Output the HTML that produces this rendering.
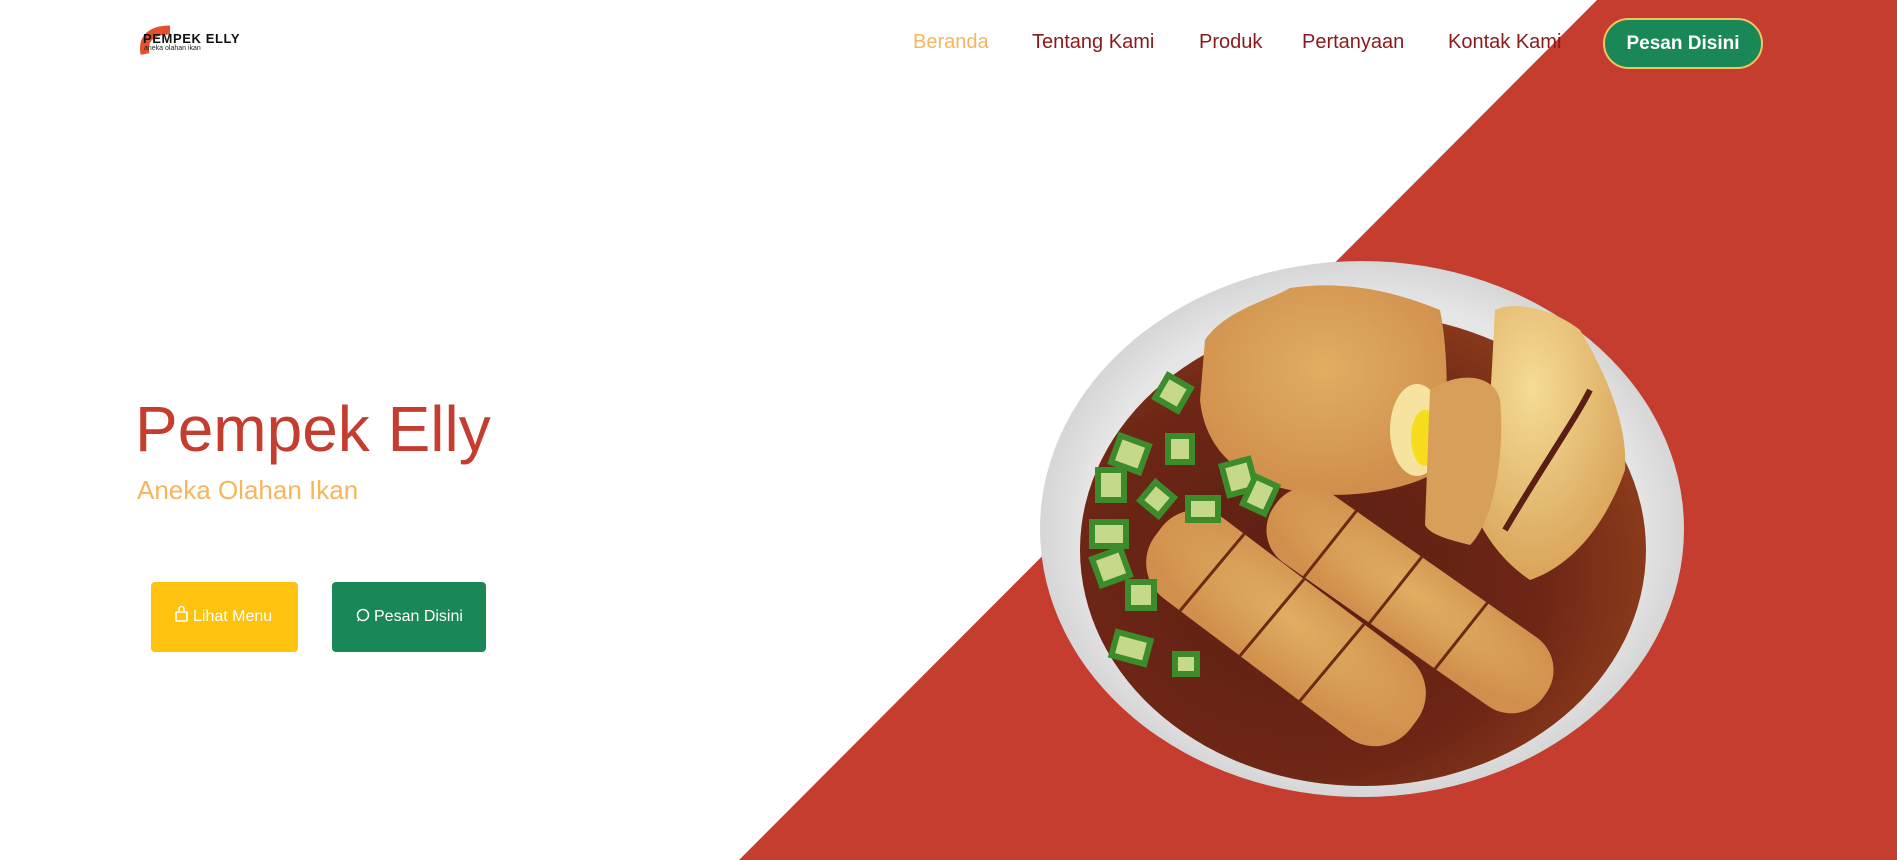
<!DOCTYPE html>
<html><head><meta charset="utf-8"><style>
html,body{margin:0;padding:0;width:1897px;height:860px;overflow:hidden;background:#fff;font-family:"Liberation Sans",sans-serif;}
.abs{position:absolute}
.nav a{position:absolute;top:31px;font-size:20px;color:#8a1a1a;text-decoration:none;white-space:nowrap}
</style></head><body>
<svg class="abs" style="left:0;top:0" width="1897" height="860" viewBox="0 0 1897 860">
<defs>
<radialGradient id="pl" cx="50%" cy="50%" r="50%"><stop offset="85%" stop-color="#e6e6e6"/><stop offset="100%" stop-color="#d6d6d6"/></radialGradient>
<radialGradient id="sc" cx="40%" cy="55%" r="60%"><stop offset="0%" stop-color="#5a1f12"/><stop offset="70%" stop-color="#6e2616"/><stop offset="100%" stop-color="#8a3a1a"/></radialGradient>
<radialGradient id="fd" cx="50%" cy="40%" r="60%"><stop offset="0%" stop-color="#e0ae62"/><stop offset="100%" stop-color="#d08f4c"/></radialGradient>
<radialGradient id="fl" cx="40%" cy="30%" r="70%"><stop offset="0%" stop-color="#f5dc95"/><stop offset="100%" stop-color="#d9a45a"/></radialGradient>
</defs>
<polygon points="1597,0 1897,0 1897,860 739,860" fill="#c43d2f"/>
<ellipse cx="1362" cy="529" rx="322" ry="268" fill="url(#pl)"/>
<ellipse cx="1363" cy="550" rx="283" ry="236" fill="url(#sc)"/>
<path d="M1205,340 C1225,310 1270,300 1290,288 C1330,282 1380,285 1440,310 C1450,360 1448,430 1440,470 C1400,495 1330,500 1290,490 C1240,480 1205,450 1200,400 Z" fill="url(#fd)"/>
<ellipse cx="1417" cy="430" rx="27" ry="46" fill="#f7e3a0"/>
<ellipse cx="1425" cy="438" rx="14" ry="28" fill="#f6dd1e"/>
<path d="M1495,310 C1515,300 1555,310 1580,330 C1610,380 1628,430 1625,470 C1600,540 1560,570 1530,580 C1500,560 1480,530 1470,500 C1490,450 1490,400 1495,310 Z" fill="url(#fl)"/>
<path d="M1430,390 C1460,370 1495,375 1500,400 C1505,450 1495,520 1470,545 C1450,540 1430,535 1425,525 Z" fill="#d79f59"/>
<path d="M1590,390 C1575,420 1540,470 1505,530" stroke="#5a1f12" stroke-width="6" fill="none"/>
<g transform="translate(1286,628) rotate(37)">
<rect x="-160" y="-50" width="320" height="100" rx="45" fill="url(#fd)"/>
<path d="M-90,-50 L-95,50 M-15,-50 L-20,50 M60,-50 L55,50" stroke="#6a2a14" stroke-width="3"/>
</g>
<g transform="translate(1410,600) rotate(35)">
<rect x="-165" y="-42" width="330" height="84" rx="40" fill="url(#fd)"/>
<path d="M-95,-42 L-100,42 M-15,-42 L-20,42 M65,-42 L60,42" stroke="#6a2a14" stroke-width="3"/>
</g>
<g fill="#c6d98a" stroke="#3c8c2c" stroke-width="6">
<rect x="1160" y="380" width="26" height="26" transform="rotate(30 1173 393)"/>
<rect x="1115" y="440" width="30" height="28" transform="rotate(20 1130 454)"/>
<rect x="1168" y="436" width="24" height="26"/>
<rect x="1098" y="470" width="26" height="30"/>
<rect x="1145" y="487" width="24" height="24" transform="rotate(40 1157 499)"/>
<rect x="1225" y="462" width="28" height="30" transform="rotate(-15 1239 477)"/>
<rect x="1188" y="498" width="30" height="22"/>
<rect x="1248" y="480" width="24" height="30" transform="rotate(25 1260 495)"/>
<rect x="1092" y="522" width="34" height="24"/>
<rect x="1096" y="553" width="30" height="28" transform="rotate(-20 1111 567)"/>
<rect x="1128" y="582" width="26" height="26"/>
<rect x="1114" y="636" width="34" height="24" transform="rotate(15 1131 648)"/>
<rect x="1175" y="654" width="22" height="20"/>
</g>
<path d="M145,54 C142,38 152,30 170,30" stroke="#e5502c" stroke-width="9" fill="none"/>
<!-- bag icon -->
<g stroke="#fff" stroke-width="1.6" fill="none"><rect x="176" y="612" width="11" height="9" rx="1"/><path d="M179,612 v-3 a2.5,2.5 0 0 1 5,0 v3"/></g>
<!-- whatsapp icon -->
<g stroke="#fff" stroke-width="1.5" fill="none"><circle cx="363" cy="615" r="5.5"/><path d="M358,621 l1,-2.5"/></g>
</svg>
<div class="abs" style="left:143px;top:31px;font-size:13px;font-weight:bold;color:#111;letter-spacing:0.6px">PEMPEK&nbsp;ELLY</div>
<div class="abs" style="left:144px;top:45px;font-size:7px;color:#222">aneka olahan ikan</div>
<div class="nav">
<a style="left:913px;color:#f7b55c">Beranda</a>
<a style="left:1032px">Tentang Kami</a>
<a style="left:1199px">Produk</a>
<a style="left:1302px">Pertanyaan</a>
<a style="left:1448px">Kontak Kami</a>
</div>
<div class="abs" style="left:1603px;top:18px;width:156px;height:47px;border:2px solid #f2c260;border-radius:26px;background:#1a8856;color:#fff;font-weight:bold;font-size:19px;text-align:center;line-height:47px">Pesan Disini</div>
<div class="abs" style="left:135px;top:389px;font-size:64px;color:#c43d2f;line-height:80px">Pempek Elly</div>
<div class="abs" style="left:137px;top:474px;font-size:26px;color:#f7b55c;line-height:32px">Aneka Olahan Ikan</div>
<div class="abs" style="left:151px;top:582px;width:147px;height:70px;background:#fec20f;border-radius:4px;color:#fff;font-size:16px;line-height:70px"><span style="position:absolute;left:42px">Lihat Menu</span></div>
<div class="abs" style="left:332px;top:582px;width:154px;height:70px;background:#1a8856;border-radius:4px;color:#fff;font-size:16px;line-height:70px"><span style="position:absolute;left:42px">Pesan Disini</span></div>
<svg class="abs" style="left:0;top:0" width="1897" height="860"><g stroke="#fff" stroke-width="1.6" fill="none"><rect x="176" y="612" width="11" height="9" rx="1"/><path d="M179,612 v-3 a2.5,2.5 0 0 1 5,0 v3"/><circle cx="363" cy="615" r="5.5" stroke-width="1.5"/><path d="M358,621 l1,-2.5"/></g></svg>
</body></html>
